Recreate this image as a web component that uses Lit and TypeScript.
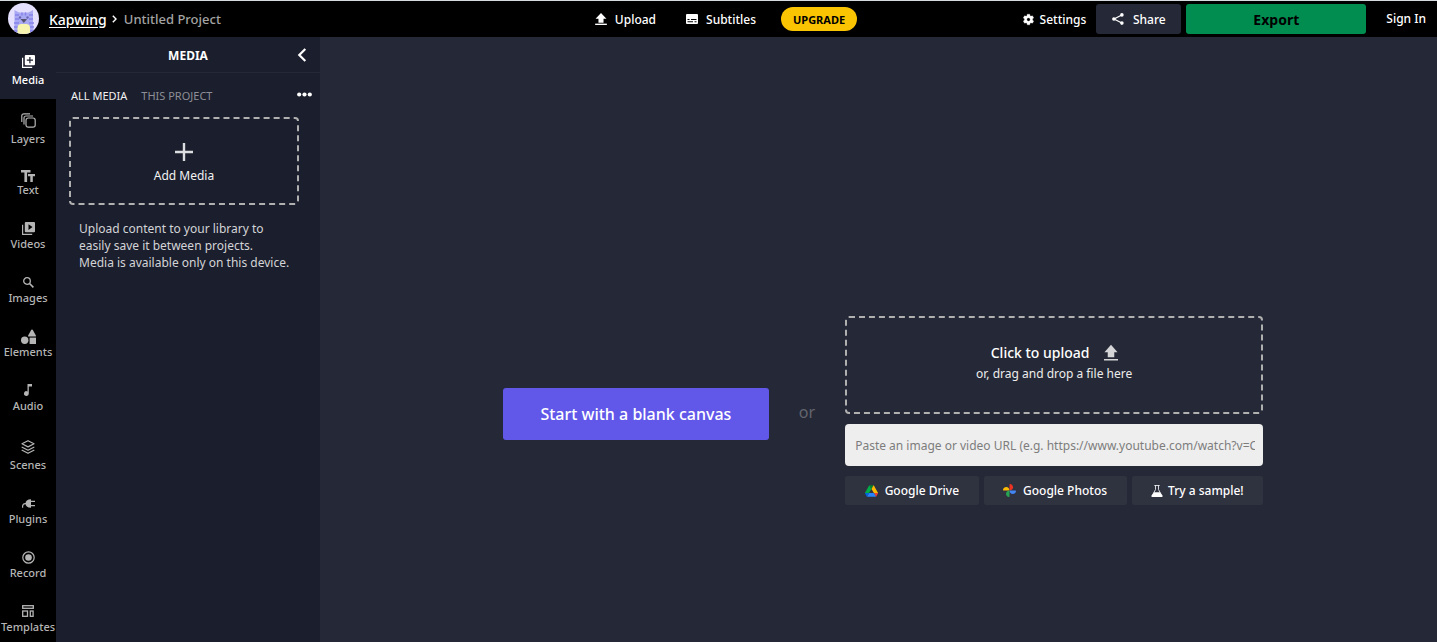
import { LitElement, html, css, svg, nothing } from "lit";
import { customElement, state } from "lit/decorators.js";

type Glyph = { box: string; w: number; h: number; art: unknown };

const uploadArt = svg`<path d="M6 0l5.6 5.800H8.600V10H3.400V5.800H.4z"/><path d="M0 10.900h12v1.400H0z"/>`;

const glyphs: Record<string, Glyph> = {
  media: { box: "0 0 13 13", w: 13, h: 13, art: svg`<path d="M.6 2.800V12.400H10.200" fill="none" stroke="currentColor" stroke-width="1.200"/><path fill-rule="evenodd" d="M3.800 0h8.200a1 1 0 0 1 1 1v8.200a1 1 0 0 1-1 1H3.800a1 1 0 0 1-1-1V1a1 1 0 0 1 1-1zm3.500 2v2.500H4.800v1.200h2.500v2.500h1.200V5.700H11V4.500H8.500V2z"/>` },
  layers: { box: "0 0 15 15", w: 15, h: 15, art: svg`<g fill="none" stroke="currentColor" stroke-width="1.200"><rect x="5" y="5" width="9.200" height="9.200" rx="2.200"/><path d="M3 11.500V5a2 2 0 0 1 2-2h7M.8 9V2.800a2 2 0 0 1 2-2H9"/></g>` },
  text: { box: "0 0 14 12", w: 14, h: 12, art: svg`<path d="M0 0h9.500v2.600H6.100V12H3.400V2.600H0zM7 4h7v2.300h-2.200V12H9.300V6.300H7z"/>` },
  videos: { box: "0 0 13 13", w: 13, h: 13, art: svg`<path d="M.6 2.800V12.400H10.200" fill="none" stroke="currentColor" stroke-width="1.200"/><path fill-rule="evenodd" d="M3.800 0h8.200a1 1 0 0 1 1 1v8.200a1 1 0 0 1-1 1H3.800a1 1 0 0 1-1-1V1a1 1 0 0 1 1-1zm2.700 2.300v5.600l4-2.800z"/>` },
  images: { box: "0 0 11 11", w: 11, h: 11, art: svg`<g fill="none" stroke="currentColor"><circle cx="4" cy="4" r="3.300" stroke-width="1.300"/><path d="M6.500 6.500l3.900 3.900" stroke-width="1.600"/></g>` },
  elements: { box: "0 0 15 15", w: 15, h: 15, art: svg`<circle cx="3.700" cy="11.200" r="3.700"/><rect x="8.600" y="8.600" width="6.400" height="6.400"/><path d="M10.300.8a.8.8 0 0 1 1.400 0l3.300 6a.6.6 0 0 1-.5.800h-7a.6.6 0 0 1-.5-.8z"/>` },
  audio: { box: "0 0 8 12", w: 8, h: 12, art: svg`<path d="M3.500 0H8v2.600H4.800v6.900a2.400 2.400 0 1 1-1.300-2.100z"/>` },
  scenes: { box: "0 0 14 14", w: 14, h: 14, art: svg`<g fill="none" stroke="currentColor" stroke-width="1.200" stroke-linejoin="round"><path d="M7 .7l6 3.100-6 3.100-6-3.100zM.7 7L7 10.300 13.300 7M.7 10L7 13.300 13.300 10"/></g>` },
  plugins: { box: "0 0 13 9", w: 13, h: 9, art: svg`<path d="M.6 8.700C.3 5.500 1.500 4.300 4 4.600" fill="none" stroke="currentColor" stroke-width="1.200"/><path d="M9 .2v8.600C5.400 8.800 3.500 7 3.500 4.500S5.400.2 9 .2zM9 1.800h4v1.200H9zM9 6h4v1.200H9z"/>` },
  record: { box: "0 0 13 13", w: 13, h: 13, art: svg`<circle cx="6.500" cy="6.500" r="5.700" fill="none" stroke="currentColor" stroke-width="1.200"/><circle cx="6.500" cy="6.500" r="3.300"/>` },
  templates: { box: "0 0 12 12", w: 12, h: 12, art: svg`<g fill="none" stroke="currentColor" stroke-width="1.300"><rect x=".7" y=".7" width="10.600" height="2.600"/><rect x=".7" y="6" width="4.800" height="5.300"/><rect x="8.300" y="6" width="2.800" height="5.300"/></g>` },
  upload: { box: "0 0 12 12.3", w: 12, h: 12, art: uploadArt },
  uploadLarge: { box: "0 0 12 12.3", w: 14, h: 16, art: svg`<path d="M6 -1l5.600 6.400H8.800V9.800H3.200V5.400H.4zM0 11.300h12v1.200H0z"/>` },
  subtitles: { box: "0 0 12 10", w: 12, h: 10, art: svg`<path fill-rule="evenodd" d="M1 0h10a1 1 0 0 1 1 1v8a1 1 0 0 1-1 1H1a1 1 0 0 1-1-1V1a1 1 0 0 1 1-1zm.5 5v1h2V5zm3.500 0v1h5.500V5zM1.500 7.200v1H7v-1zm7 0v1h2v-1z"/>` },
  settings: { box: "2 2 20 20", w: 11, h: 11, art: svg`<path d="M19.140 12.940c.04-.3.060-.61.060-.94 0-.32-.02-.64-.07-.94l2.030-1.580a.49.49 0 0 0 .12-.61l-1.920-3.320a.49.49 0 0 0-.59-.22l-2.390.96a7 7 0 0 0-1.620-.94l-.36-2.540a.48.48 0 0 0-.48-.41h-3.840a.47.47 0 0 0-.47.41l-.36 2.540a7.300 7.300 0 0 0-1.620.94l-2.390-.96a.47.47 0 0 0-.59.22L2.740 8.870a.47.47 0 0 0 .12.61l2.030 1.580a6 6 0 0 0-.07.94c0 .3.020.64.070.94l-2.030 1.580a.49.49 0 0 0-.12.61l1.920 3.320c.12.22.37.29.59.22l2.390-.96c.5.380 1.030.7 1.620.94l.36 2.540c.05.24.24.41.48.41h3.840c.24 0 .44-.17.470-.41l.36-2.540a7 7 0 0 0 1.620-.94l2.390.96c.22.080.47 0 .59-.22l1.920-3.320a.47.47 0 0 0-.12-.61zM12 15.200a3.200 3.200 0 1 1 0-6.400 3.200 3.200 0 0 1 0 6.400z" stroke="currentColor" stroke-width=".6"/>` },
  share: { box: "0 0 12 12", w: 12, h: 12, art: svg`<path d="M9.800 2L2 6l7.800 4" fill="none" stroke="currentColor" stroke-width="1.200"/><circle cx="9.900" cy="1.900" r="1.800"/><circle cx="1.900" cy="6" r="1.800"/><circle cx="9.900" cy="10.100" r="1.800"/>` },
  chevron: { box: "0 0 9 14", w: 10, h: 14, art: svg`<path d="M7.800 1L1.800 7l6 6" fill="none" stroke="currentColor" stroke-width="2.200"/>` },
  crumb: { box: "0 0 5 8", w: 5, h: 8, art: svg`<path d="M.8.8L4 4 .8 7.200" fill="none" stroke="currentColor" stroke-width="1.400"/>` },
  dots: { box: "0 0 15 5", w: 15, h: 5, art: svg`<circle cx="2.200" cy="2.500" r="2.100"/><circle cx="7.500" cy="2.500" r="2.100"/><circle cx="12.800" cy="2.500" r="2.100"/>` },
  plus: { box: "0 0 18 18", w: 18, h: 18, art: svg`<path d="M7.800 0h2.400v7.800H18v2.400h-7.800V18H7.800v-7.800H0V7.800h7.800z"/>` },
  drive: { box: "0 0 87.3 78", w: 13, h: 12, art: svg`<path fill="#0066da" d="m6.600 66.850 3.850 6.650c.8 1.400 1.950 2.500 3.300 3.300l13.750-23.800h-27.500c0 1.550.4 3.100 1.200 4.500z"/><path fill="#00ac47" d="m43.650 25-13.750-23.800c-1.350.8-2.500 1.900-3.300 3.300l-25.400 44a9.060 9.060 0 0 0-1.200 4.500h27.500z"/><path fill="#ea4335" d="m73.550 76.800c1.350-.8 2.500-1.900 3.300-3.300l1.600-2.750 7.650-13.250c.8-1.400 1.200-2.950 1.200-4.500h-27.500l5.850 11.500z"/><path fill="#00832d" d="m43.650 25 13.750-23.800c-1.350-.8-2.900-1.200-4.500-1.200h-18.500c-1.600 0-3.150.45-4.500 1.200z"/><path fill="#2684fc" d="m59.800 53h-32.300l-13.750 23.800c1.350.8 2.900 1.200 4.500 1.200h50.800c1.600 0 3.150-.45 4.500-1.200z"/><path fill="#ffba00" d="m73.400 26.500-12.700-22c-.8-1.400-1.950-2.500-3.300-3.300l-13.750 23.800 16.150 28h27.450c0-1.550-.4-3.100-1.200-4.500z"/>` },
  photos: { box: "0 0 24 24", w: 13, h: 13, art: svg`<path fill="#fbbc04" d="M6 5.500c3.500 0 6 2.800 6 6.500H1c-.6 0-1-.4-1-1 0-3 2.600-5.500 6-5.500z"/><path fill="#ea3323" d="M18.500 6c0 3.500-2.800 6-6.500 6V1c0-.6.400-1 1-1 3 0 5.500 2.600 5.500 6z"/><path fill="#4285f4" d="M18 18.500c-3.500 0-6-2.800-6-6.500h11c.6 0 1 .4 1 1 0 3-2.600 5.500-6 5.500z"/><path fill="#27a351" d="M5.500 18c0-3.500 2.800-6 6.500-6v11c0 .6-.4 1-1 1-3 0-5.500-2.600-5.500-6z"/>` },
  flask: { box: "0 0 12 12", w: 12, h: 12, art: svg`<path d="M3.300 .5h5.400M4.500.5v4L1 11h10L7.500 4.500v-4" fill="none" stroke="currentColor" stroke-width=".8"/><path d="M3 7.200h6l2.500 3.500a.8.8 0 0 1-.7 1.300H1.200a.8.8 0 0 1-.7-1.300z"/>` },
};

const glyph = (name: string) => {
  const g = glyphs[name];
  return html`<svg class="glyph" width=${g.w} height=${g.h} viewBox=${g.box} fill="currentColor" aria-hidden="true">${g.art}</svg>`;
};

const avatar = html`<svg class="avatar" width="32" height="32" viewBox="0 0 32 32" role="img" aria-label="Workspace avatar">
  <defs><clipPath id="disc"><circle cx="15.500" cy="15.500" r="15.500"/></clipPath></defs>
  <g clip-path="url(#disc)">
    <rect width="32" height="32" fill="#e4e0fd"/>
    <path d="M6.500 7l4.500 2.500h9.500L25 7v13l1 12H6l.5-12z" fill="#a9a8f3"/>
    <path d="M7 12h4M7 16h4M21 12h4M21 16h4M6 20h5M6 24h4M6 28h4M21 20h5M22 24h4M22 28h4M14 9.500v3M17.500 9.500v3" stroke="#8582ea" stroke-width="1.400"/>
    <circle cx="12" cy="14.500" r="1.200" fill="#6a67b4"/><circle cx="19.500" cy="14.500" r="1.200" fill="#6a67b4"/>
    <path d="M12.500 16h6.600l-3.300 4z" fill="#55526e"/>
    <path d="M9.500 32v-7a4 4 0 0 1 4-4h4.500a4 4 0 0 1 4 4v7z" fill="#f8f5b0"/>
  </g></svg>`;

const tools = [
  { id: "media", label: "Media", size: "tall" },
  { id: "layers", label: "Layers", size: "tall" },
  { id: "text", label: "Text", size: "short" },
  { id: "videos", label: "Videos", size: "" },
  { id: "images", label: "Images", size: "" },
  { id: "elements", label: "Elements", size: "" },
  { id: "audio", label: "Audio", size: "" },
  { id: "scenes", label: "Scenes", size: "tall" },
  { id: "plugins", label: "Plugins", size: "" },
  { id: "record", label: "Record", size: "" },
  { id: "templates", label: "Templates", size: "" },
];

const reset = css`
  * { box-sizing: border-box; }
  button, input { font: inherit; color: inherit; border: 0; margin: 0; padding: 0; background: none; }
  button { cursor: pointer; }
  a { color: inherit; text-decoration: none; }
  .glyph { display: block; flex: none; overflow: visible; }
`;

@customElement("editor-header")
class EditorHeader extends LitElement {
  static styles = [reset, css`
    :host { display: block; }
    .bar { display: grid; grid-template-columns: 1fr auto 1fr; align-items: center; height: 37px; background: #000; border-top: 1px solid #d5dbdf; font-weight: 500; }
    .crumbs { display: flex; align-items: center; padding-left: 8px; font-size: 14px; }
    .avatar { display: block; margin-right: 9px; }
    .brand { text-decoration: underline; text-underline-offset: 2px; margin-right: 5px; }
    .project { color: #a3a3a3; margin-left: 7px; font-size: 13px; }
    .group { display: flex; align-items: center; }
    .right { justify-content: flex-end; }
    .action { display: flex; align-items: center; gap: 8px; height: 30px; padding: 0 15px; }
    .settings { gap: 6px; padding: 0 10px; }
    .upgrade { height: 24px; padding: 0 12px; margin-left: 10px; border-radius: 12px; background: #fbc403; color: #000; font-size: 11px; font-weight: 700; }
    .share { gap: 9px; width: 85px; justify-content: center; padding: 0; border-radius: 3px; background: #252836; margin-right: 5px; }
    .export { width: 180px; height: 30px; border-radius: 3px; background: #018d50; color: #000; font-size: 14px; font-weight: 700; }
    .signin { padding: 0 11px 2px 20px; }
  `];
  render() {
    return html`<header class="bar">
      <nav class="crumbs" aria-label="Breadcrumb">
        ${avatar}<a class="brand" href="#">Kapwing</a>${glyph("crumb")}<span class="project">Untitled Project</span>
      </nav>
      <div class="group">
        <button class="action">${glyph("upload")}Upload</button>
        <button class="action">${glyph("subtitles")}Subtitles</button>
        <button class="upgrade">UPGRADE</button>
      </div>
      <div class="group right">
        <button class="action settings">${glyph("settings")}Settings</button>
        <button class="action share">${glyph("share")}Share</button>
        <button class="export">Export</button>
        <a class="signin" href="#">Sign In</a>
      </div>
    </header>`;
  }
}

@customElement("tool-rail")
class ToolRail extends LitElement {
  @state() private active = "media";
  static styles = [reset, css`
    :host { display: block; width: 56px; background: #000; overflow: hidden; }
    .rail { display: flex; flex-direction: column; }
    .tool { display: flex; flex-direction: column; align-items: center; padding: 11px 0; color: #b5b5b5; font-size: 11px; line-height: 16px; font-weight: 500; white-space: nowrap; }
    .slot { display: grid; place-items: center; height: 16px; }
    .tall { height: 21px; }
    .short { height: 13px; }
    .active { padding-top: 14px; background: #1b1e2c; color: #fff; }
  `];
  render() {
    return html`<nav class="rail" aria-label="Tools">${tools.map((t) => html`
      <button class="tool ${t.id === this.active ? "active" : ""}" aria-current=${t.id === this.active ? "true" : nothing} @click=${() => (this.active = t.id)}>
        <span class="slot ${t.size}">${glyph(t.id)}</span><span>${t.label}</span>
      </button>`)}</nav>`;
  }
}

@customElement("media-panel")
class MediaPanel extends LitElement {
  static styles = [reset, css`
    :host { display: block; width: 264px; background: #1b1e2c; }
    .head { display: grid; grid-template-columns: 1fr auto 1fr; align-items: center; height: 36px; padding: 1px 13px 0; border-bottom: 1px solid #252836; }
    .title { grid-column: 2; margin: 0; font-size: 12px; font-weight: 700; }
    .collapse { justify-self: end; }
    .tabs { display: flex; align-items: center; gap: 14px; padding: 14px 8px 13px 15px; font-size: 11px; line-height: 17px; }
    .tab { color: #8d8e96; }
    .on { color: #f2f2f2; }
    .more { margin-left: auto; padding-bottom: 3px; }
    .drop { display: flex; flex-direction: column; align-items: center; justify-content: center; gap: 6px; width: 230px; height: 88px; padding-top: 4px; margin-left: 13px; border: 2px dashed #b0b0b0; border-radius: 4px; line-height: 17px; color: #f2f2f2; }
    .note { margin: 15px 23px 0; line-height: 17px; color: #d3d4d7; }
    .plus { color: #dcdde0; }
  `];
  render() {
    return html`<section>
      <header class="head"><h2 class="title">MEDIA</h2><button class="collapse" aria-label="Collapse panel">${glyph("chevron")}</button></header>
      <div class="tabs">
        <button class="tab on">ALL MEDIA</button><button class="tab">THIS PROJECT</button>
        <button class="more" aria-label="More options">${glyph("dots")}</button>
      </div>
      <button class="drop"><span class="plus">${glyph("plus")}</span>Add Media</button>
      <p class="note">Upload content to your library to<br>easily save it between projects.<br>Media is available only on this device.</p>
    </section>`;
  }
}

@customElement("start-canvas")
class StartCanvas extends LitElement {
  static styles = [reset, css`
    :host { display: flex; align-items: center; justify-content: center; padding: 148px 0 0 9px; background: #252836; }
    .start { display: flex; align-items: center; gap: 30px; }
    .blank { width: 266px; height: 52px; border-radius: 3px; background: #6158ea; color: #fff; font-size: 16px; font-weight: 500; }
    .or { padding-bottom: 3px; color: #62646e; font-size: 16px; }
    .sources { display: grid; gap: 10px; width: 418px; padding-bottom: 6px; }
    .drop { display: flex; flex-direction: column; align-items: center; justify-content: center; gap: 2px; height: 98px; padding-bottom: 4px; border: 2px dashed #b0b0b0; border-radius: 4px; color: #ededed; line-height: 18px; }
    .lead { display: flex; align-items: center; gap: 14px; color: #fff; font-size: 14px; font-weight: 500; line-height: 20px; }
    .arrow { color: #d5d5d8; }
    .url { width: 100%; height: 42px; padding: 0 8px 0 10px; border-radius: 4px; background: #eee; color: #222; }
    .url::placeholder { color: #7d7d7d; opacity: 1; }
    .row { display: flex; gap: 5px; }
    .source { display: flex; flex: 1 1 auto; align-items: center; justify-content: center; gap: 7px; height: 29px; border-radius: 2px; background: #2f323f; color: #fff; font-weight: 500; }
    .sample { gap: 5px; }
  `];
  render() {
    return html`<main class="start">
      <button class="blank">Start with a blank canvas</button>
      <span class="or">or</span>
      <div class="sources">
        <button class="drop"><span class="lead">Click to upload<span class="arrow">${glyph("uploadLarge")}</span></span>or, drag and drop a file here</button>
        <input class="url" type="url" aria-label="Image or video URL" placeholder="Paste an image or video URL (e.g. https://www.youtube.com/watch?v=C">
        <div class="row">
          <button class="source">${glyph("drive")}Google Drive</button>
          <button class="source">${glyph("photos")}Google Photos</button>
          <button class="source sample">${glyph("flask")}Try a sample!</button>
        </div>
      </div>
    </main>`;
  }
}

@customElement("app-root")
class AppRoot extends LitElement {
  static styles = css`
    :host { display: flex; flex-direction: column; height: 100vh; overflow: hidden; background: #252836; color: #fff; font-family: "Noto Sans", "Open Sans", sans-serif; font-size: 12px; }
    .body { display: flex; flex: 1; min-height: 0; }
    .canvas { flex: 1; }
  `;
  render() {
    return html`<editor-header></editor-header>
      <div class="body"><tool-rail></tool-rail><media-panel></media-panel><start-canvas class="canvas"></start-canvas></div>`;
  }
}
